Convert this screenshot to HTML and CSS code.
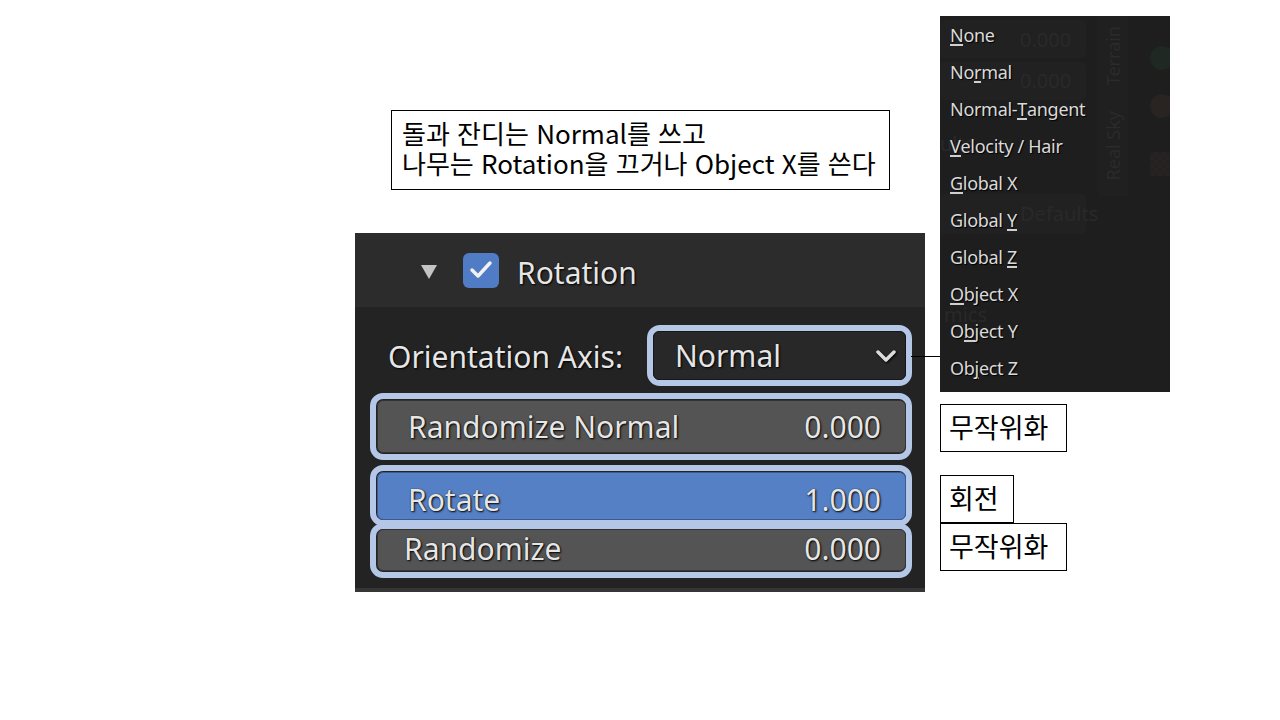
FILE: index.html
```html
<!DOCTYPE html>
<html lang="ko">
<head>
    <meta charset="UTF-8">
    <title>Rotation</title>
    <link rel="stylesheet" href="styles.css">
</head>
<body>
<div class="slide">

    <div class="note">
        돌과 잔디는 Normal를 쓰고<br>
        나무는 Rotation을 끄거나 Object X를 쓴다
    </div>

    <div class="panel">
        <div class="panel-head">
            <span class="tri"></span>
            <span class="check">
                <svg width="26" height="22" viewBox="0 0 26 22"><polyline points="4,11 10,17 22,4" fill="none" stroke="#f2f2f2" stroke-width="3.5" stroke-linecap="round" stroke-linejoin="round"/></svg>
            </span>
            <span class="head-title">Rotation</span>
        </div>
        <div class="panel-body">
            <div class="axis-row">
                <span class="label">Orientation Axis:</span>
                <div class="hl hl-axis">
                    <div class="select">
                        <span>Normal</span>
                        <svg width="22" height="14" viewBox="0 0 22 14"><polyline points="3,3 11,11 19,3" fill="none" stroke="#dcdcdc" stroke-width="3.5" stroke-linecap="round" stroke-linejoin="round"/></svg>
                    </div>
                </div>
            </div>
            <div class="hl hl-rn">
                <div class="field"><span>Randomize Normal</span><span>0.000</span></div>
            </div>
            <div class="hl hl-rot">
                <div class="field blue"><span>Rotate</span><span>1.000</span></div>
            </div>
            <div class="hl hl-rand">
                <div class="field tight"><span>Randomize</span><span>0.000</span></div>
            </div>
        </div>
    </div>

    <div class="link"></div>

    <div class="menu">
        <!-- faded window behind the popup -->
        <div class="ghost">
            <div class="g-field g1"></div>
            <div class="g-field g2"></div>
            <div class="g-field g3"></div>
            <span class="g-text" style="left:80px;top:10px">0.000</span>
            <span class="g-text" style="left:80px;top:51px">0.000</span>
            <span class="g-text" style="left:0px;top:114px">ults</span>
            <span class="g-text" style="left:80px;top:184px">Defaults</span>
            <span class="g-text" style="left:4px;top:285px">mics</span>
            <div class="g-tabs"></div>
            <span class="g-vert" style="top:10px">Terrain</span>
            <span class="g-vert" style="top:95px">Real Sky</span>
            <span class="g-dot" style="top:30px;background:#1f2822"></span>
            <span class="g-dot" style="top:78px;background:#292322"></span>
            <span class="g-dot sq" style="top:136px"></span>
        </div>
        <div class="item"><u>N</u>one</div>
        <div class="item">No<u>r</u>mal</div>
        <div class="item">Normal-<u>T</u>angent</div>
        <div class="item"><u>V</u>elocity / Hair</div>
        <div class="item"><u>G</u>lobal X</div>
        <div class="item">Global <u>Y</u></div>
        <div class="item">Global <u>Z</u></div>
        <div class="item"><u>O</u>bject X</div>
        <div class="item">O<u>b</u>ject Y</div>
        <div class="item">Ob<u>j</u>ect Z</div>
    </div>

    <div class="tag tag-1">무작위화</div>
    <div class="tag tag-2">회전</div>
    <div class="tag tag-3">무작위화</div>

</div>
</body>
</html>
```

FILE: styles.css
```css
body {
    margin: 0;
    background: #fff;
}

.slide {
    position: relative;
    width: 1280px;
    height: 720px;
    overflow: hidden;
    font-family: "Noto Sans CJK KR", "Noto Sans", sans-serif;
}

/* korean notes */
.note {
    position: absolute;
    left: 391px;
    top: 110px;
    width: 477px;
    height: 62px;
    padding: 7px 10px 9px 10px;
    border: 1px solid #000;
    font-size: 26px;
    line-height: 30px;
    color: #000;
}

.tag {
    position: absolute;
    left: 940px;
    height: 46px;
    padding: 0 8px;
    border: 1px solid #000;
    background: #fff;
    font-size: 27px;
    line-height: 44px;
    color: #000;
}

.tag-1 {
    top: 404px;
    width: 109px;
}

.tag-2 {
    top: 475px;
    width: 56px;
}

.tag-3 {
    top: 523px;
    width: 109px;
}

.link {
    position: absolute;
    left: 911px;
    top: 356px;
    width: 29px;
    height: 1px;
    background: #000;
}

/* blender panel */
.panel {
    position: absolute;
    left: 355px;
    top: 233px;
    width: 570px;
    background: #232323;
    border-bottom: 4px solid #363636;
    font-family: "Noto Sans", sans-serif;
    color: #e6e6e6;
    text-shadow: 1px 1px 2px #000, 0 0 1px rgba(0, 0, 0, 0.8);
}

.panel-head {
    height: 74px;
    background: #2c2c2c;
    display: flex;
    align-items: center;
    padding-left: 66px;
}

.tri {
    width: 0;
    height: 0;
    border-left: 8px solid transparent;
    border-right: 8px solid transparent;
    border-top: 14px solid #c4c4c4;
    margin-top: 4px;
}

.check {
    width: 36px;
    height: 35px;
    margin-left: 26px;
    border-radius: 6px;
    background: #4f7cc4;
    display: flex;
    align-items: center;
    justify-content: center;
}

.head-title {
    margin-left: 18px;
    font-size: 30px;
    margin-top: 4px;
}

.panel-body {
    padding: 18px 13px 10px 15px;
    display: flex;
    flex-direction: column;
}

.axis-row {
    display: flex;
    align-items: center;
    justify-content: space-between;
}

.label {
    padding-left: 18px;
    font-size: 30px;
    margin-top: 2px;
}

.hl {
    border: 6px solid #b4c7e7;
    border-radius: 13px;
    box-sizing: border-box;
    display: flex;
}

.hl-axis {
    width: 265px;
    height: 61px;
}

.hl-rn {
    margin-top: 7px;
    height: 67px;
    padding: 1px 0 1px 1px;
}

.hl-rot {
    margin-top: 5px;
    height: 61px;
    padding: 1px 0 0 1px;
}

.hl-rand {
    margin-top: -3px;
    height: 55px;
    padding: 0 0 1px 1px;
}

.select {
    flex: 1;
    background: #282828;
    border: 1px solid #161616;
    border-radius: 6px;
    display: flex;
    align-items: center;
    justify-content: space-between;
    padding: 0 8px 0 21px;
    font-size: 30px;
}

.select svg {
    filter: drop-shadow(1px 1px 1px #000);
}

.field {
    flex: 1;
    background: #545454;
    border: 1px solid #333;
    border-radius: 6px;
    display: flex;
    align-items: center;
    justify-content: space-between;
    padding: 0 24px 0 30px;
    font-size: 30px;
}

.field.blue {
    background: #5580c6;
    border-color: #3a5a90;
    padding-top: 6px;
}

.field.tight {
    padding-left: 26px;
    padding-bottom: 4px;
}

/* popup menu */
.menu {
    position: absolute;
    left: 940px;
    top: 16px;
    width: 230px;
    height: 376px;
    box-sizing: border-box;
    padding-top: 1px;
    background: #1e1e1e;
    overflow: hidden;
    font-family: "Noto Sans", sans-serif;
}

.ghost {
    position: absolute;
    inset: 0;
}

.g-field {
    position: absolute;
    left: 0;
    width: 146px;
    border-radius: 4px;
    background: #212121;
}

.g1 { top: 4px; height: 38px; }
.g2 { top: 46px; height: 38px; }
.g3 { top: 178px; height: 40px; }

.g-text {
    position: absolute;
    font-size: 20px;
    color: #292929;
}

.g-tabs {
    position: absolute;
    left: 158px;
    top: 0;
    width: 30px;
    height: 180px;
    background: #202020;
}

.g-vert {
    position: absolute;
    left: 161px;
    font-size: 18px;
    color: #2b2b2b;
    writing-mode: vertical-rl;
    transform: rotate(180deg);
}

.g-dot {
    position: absolute;
    left: 210px;
    width: 24px;
    height: 24px;
    border-radius: 50%;
}

.g-dot.sq {
    border-radius: 3px;
    background: repeating-conic-gradient(#2a2222 0 25%, #222 0 50%) 0 0 / 8px 8px;
}

.item {
    position: relative;
    height: 37px;
    line-height: 37px;
    padding-left: 10px;
    font-size: 18px;
    letter-spacing: -0.3px;
    color: #dadada;
    text-shadow: 1px 1px 1px #000;
}

.item u {
    text-decoration: none;
    border-bottom: 2px solid #cfcfcf;
    line-height: 1;
    display: inline-block;
}
```
